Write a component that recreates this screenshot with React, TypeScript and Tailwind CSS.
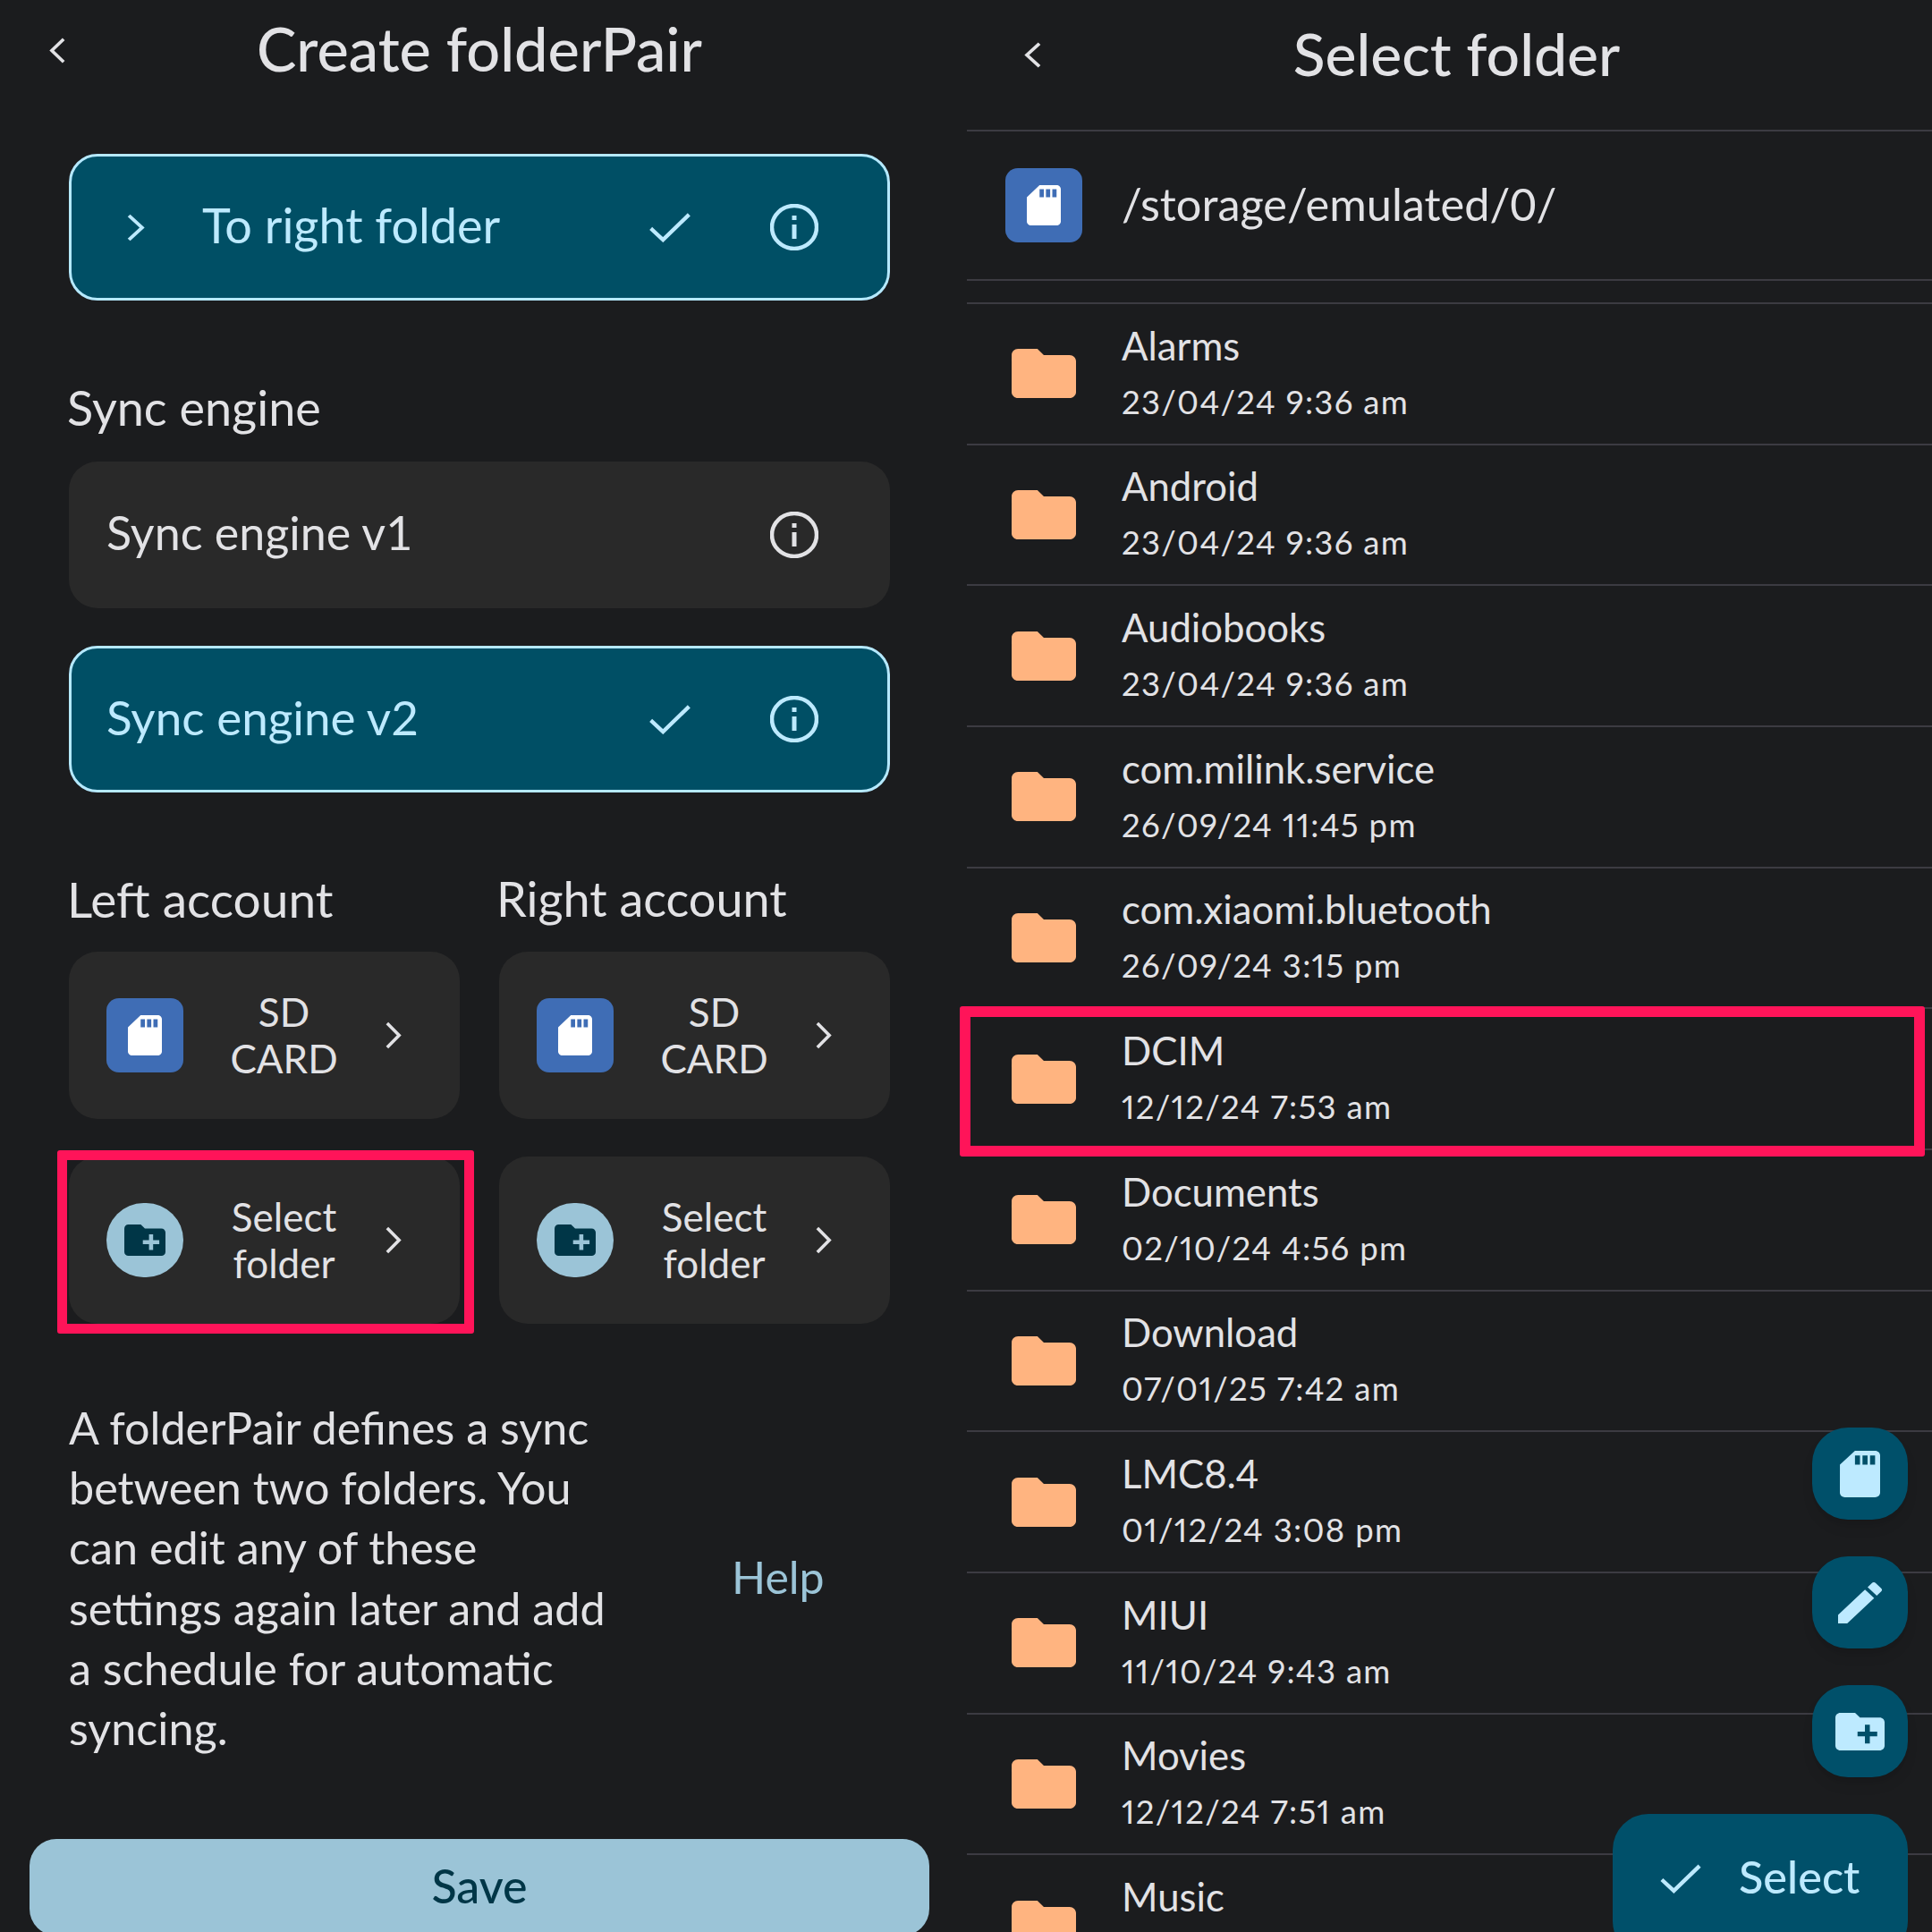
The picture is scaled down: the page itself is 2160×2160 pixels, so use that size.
const SD = 'M18 2h-8L4.02 8 4 20c0 1.1.9 2 2 2h12c1.1 0 2-.9 2-2V4c0-1.1-.9-2-2-2zm-6 6h-2V4h2v4zm3 0h-2V4h2v4zm3 0h-2V4h2v4z'
const FOLDER_ADD = 'M20 6h-8l-2-2H4c-1.11 0-1.99.89-1.99 2L2 18c0 1.11.89 2 2 2h16c1.11 0 2-.89 2-2V8c0-1.11-.89-2-2-2zm-1 8h-3v3h-2v-3h-3v-2h3V9h2v3h3v2z'
const FOLDER = 'M10 4H4c-1.1 0-1.99.9-1.99 2L2 18c0 1.1.9 2 2 2h16c1.1 0 2-.9 2-2V8c0-1.1-.9-2-2-2h-8l-2-2z'
const EDIT = 'M3 17.25V21h3.75L17.81 9.94l-3.75-3.75L3 17.25zM20.71 7.04c.39-.39.39-1.02 0-1.41l-2.34-2.34c-.39-.39-1.02-.39-1.41 0l-1.83 1.83 3.75 3.75 1.83-1.83z'

const folders = [
  ['Alarms', '23/04/24 9:36 am'],
  ['Android', '23/04/24 9:36 am'],
  ['Audiobooks', '23/04/24 9:36 am'],
  ['com.milink.service', '26/09/24 11:45 pm'],
  ['com.xiaomi.bluetooth', '26/09/24 3:15 pm'],
  ['DCIM', '12/12/24 7:53 am'],
  ['Documents', '02/10/24 4:56 pm'],
  ['Download', '07/01/25 7:42 am'],
  ['LMC8.4', '01/12/24 3:08 pm'],
  ['MIUI', '11/10/24 9:43 am'],
  ['Movies', '12/12/24 7:51 am'],
  ['Music', ''],
]

function Glyph({ d, box, className }: { d: string; box: string; className: string }) {
  return (
    <svg viewBox={box} preserveAspectRatio="none" className={className} fill="currentColor">
      <path d={d} />
    </svg>
  )
}

function Chevron({ left, className }: { left?: boolean; className: string }) {
  return (
    <svg viewBox="0 0 20 32" preserveAspectRatio="none" className={className} fill="none" stroke="currentColor" strokeWidth="3.8">
      <polyline points={left ? '17,2 3,16 17,30' : '3,2 17,16 3,30'} />
    </svg>
  )
}

function Check({ className }: { className: string }) {
  return (
    <svg viewBox="0 0 48 34" className={className} fill="none" stroke="currentColor" strokeWidth="4.5">
      <polyline points="2,18 16,31 46,2" />
    </svg>
  )
}

function Info() {
  return (
    <svg viewBox="0 0 54 52" className="w-[54px] h-[52px] shrink-0" fill="none" stroke="currentColor">
      <ellipse cx="27" cy="26" rx="25" ry="24" strokeWidth="4.5" />
      <line x1="27" y1="23" x2="27" y2="39" strokeWidth="5" />
      <line x1="27" y1="13" x2="27" y2="18" strokeWidth="5" />
    </svg>
  )
}

function SdBadge() {
  return (
    <div className="w-[86px] h-[83px] shrink-0 rounded-[14px] bg-[#3f6db5] flex items-center justify-center text-white">
      <Glyph d={SD} box="4 2 16 20" className="w-[38px] h-[45px]" />
    </div>
  )
}

function AccountCard({ lines, kind }: { lines: string[]; kind: 'sd' | 'folder' }) {
  return (
    <div className="h-[187px] rounded-[32px] bg-[#292929] flex items-center pl-[42px] pr-[65px] text-[#e2e2e5]">
      {kind === 'sd' ? (
        <SdBadge />
      ) : (
        <div className="w-[86px] h-[83px] shrink-0 rounded-full bg-[#9bc4d7] flex items-center justify-center text-[#003647]">
          <Glyph d={FOLDER_ADD} box="2 4 20 16" className="w-[46px] h-[35px]" />
        </div>
      )}
      <div className="flex-1 text-center text-[44px] leading-[52px] pb-[2px]">
        {lines.map((l) => (
          <div key={l}>{l}</div>
        ))}
      </div>
      <Chevron className="w-[19px] h-[31px] shrink-0" />
    </div>
  )
}

function Fab({ children }: { children: React.ReactNode }) {
  return (
    <div className="w-[107px] h-[103px] rounded-[40px] bg-[#00506a] text-[#bdeaff] flex items-center justify-center shadow-lg">
      {children}
    </div>
  )
}

export default function App() {
  return (
    <div className="relative flex w-[2160px] h-[2160px] overflow-hidden bg-[#1b1c1e] font-[Lato,sans-serif] text-[#e2e2e5]">
      {/* left screen */}
      <div className="w-[1072px] shrink-0 mr-[9px]">
        <div className="h-[112px] grid grid-cols-[1fr_auto_1fr] items-center pl-[55px]">
          <Chevron left className="w-[19px] h-[29px]" />
          <div className="text-[66.7px] font-medium leading-none -ml-[55px] pb-[3px]">Create folderPair</div>
        </div>

        <div className="mx-[77px] mt-[60px] h-[164px] rounded-[32px] border-[3px] border-[#b5e9ff] bg-[#004f65] text-[#bdeaff] flex items-center pl-[61px] pr-[77px]">
          <Chevron className="w-[21px] h-[31px]" />
          <div className="flex-1 ml-[64px] text-[54px] pb-[6px]">To right folder</div>
          <Check className="w-[48px] h-[33px] mr-[88px]" />
          <Info />
        </div>

        <div className="mx-[75px] mt-[90px] text-[54px] leading-[60px]">Sync engine</div>

        <div className="mx-[77px] mt-[30px] h-[164px] rounded-[32px] bg-[#292929] flex items-center justify-between pl-[42px] pr-[80px]">
          <div className="text-[52px] pb-[6px]">Sync engine v1</div>
          <Info />
        </div>

        <div className="mx-[77px] mt-[42px] h-[164px] rounded-[32px] border-[3px] border-[#b5e9ff] bg-[#004f65] text-[#bdeaff] flex items-center pl-[39px] pr-[77px]">
          <div className="flex-1 text-[53px] pb-[4px]">Sync engine v2</div>
          <Check className="w-[48px] h-[33px] mr-[88px]" />
          <Info />
        </div>

        <div className="mx-[77px] mt-[89px] grid grid-cols-2 gap-x-[44px]">
          <div className="text-[55px] leading-[60px] mb-[29px] -ml-[2px]">Left account</div>
          <div className="text-[54px] leading-[60px] mb-[29px] -ml-[3px]">Right account</div>
          <AccountCard kind="sd" lines={['SD', 'CARD']} />
          <AccountCard kind="sd" lines={['SD', 'CARD']} />
          <div className="mt-[42px]">
            <AccountCard kind="folder" lines={['Select', 'folder']} />
          </div>
          <div className="mt-[42px]">
            <AccountCard kind="folder" lines={['Select', 'folder']} />
          </div>
        </div>

        <div className="ml-[77px] mt-[82px] flex items-center">
          <div className="w-[741px] text-[50.3px] leading-[67.2px]">
            A folderPair defines a sync<br />
            between two folders. You<br />
            can edit any of these<br />
            settings again later and add<br />
            a schedule for automatic<br />
            syncing.
          </div>
          <div className="text-[50px] text-[#9bc4d7]">Help</div>
        </div>

        <div className="mx-[33px] mt-[91px] h-[108px] rounded-[30px] bg-[#9bc4d7] text-[#003647] text-[52px] font-medium flex items-center justify-center pb-[4px]">
          Save
        </div>
      </div>

      {/* right screen */}
      <div className="flex-1">
        <div className="h-[147px] grid grid-cols-[1fr_auto_1fr] items-center border-b-2 border-[#3c3b42] pl-[64px] pr-[48px] pb-[25px]">
          <Chevron left className="w-[20px] h-[29px] mt-[3px]" />
          <div className="text-[66px] font-medium leading-none">Select folder</div>
        </div>
        <div className="h-[167px] flex items-center border-b-2 border-[#3c3b42] pl-[43px]">
          <SdBadge />
          <div className="ml-[44px] text-[50.5px] pb-[4px]">/storage/emulated/0/</div>
        </div>
        <div className="mt-[24px] border-t-2 border-[#3c3b42]">
          {folders.map(([name, date]) => (
            <div key={name} className="h-[157.67px] border-b-2 border-[#3c3b42] flex items-center pl-[50px]">
              <Glyph d={FOLDER} box="2 4 20 16" className="w-[72px] h-[55px] shrink-0 text-[#ffb480]" />
              <div className="ml-[51px]">
                <div className="text-[43.7px] leading-[63px]">{name}</div>
                <div className="text-[36.5px] leading-[63px] tracking-[1.3px] proportional-nums">{date || '\u00a0'}</div>
              </div>
            </div>
          ))}
        </div>
      </div>

      {/* highlight boxes */}
      <div className="absolute left-[64px] top-[1286px] w-[466px] h-[205px] border-[11px] border-[#ff1459] rounded-[3px]" />
      <div className="absolute left-[1073px] top-[1125px] w-[1079px] h-[168px] border-[12px] border-[#ff1459] rounded-[3px]" />

      {/* floating buttons */}
      <div className="absolute right-[27px] top-[1596px] flex flex-col items-end gap-[41px]">
        <Fab>
          <Glyph d={SD} box="4 2 16 20" className="w-[45px] h-[52px]" />
        </Fab>
        <Fab>
          <Glyph d={EDIT} box="3 3 18 18" className="w-[49px] h-[46px]" />
        </Fab>
        <Fab>
          <Glyph d={FOLDER_ADD} box="2 4 20 16" className="w-[55px] h-[42px]" />
        </Fab>
        <div className="w-[330px] h-[160px] rounded-[40px] bg-[#00506a] text-[#bdeaff] flex items-start pl-[53px] pt-[38px] gap-[42px]">
          <Check className="w-[46px] h-[33px] mt-[18px]" />
          <div className="text-[50.5px] font-medium leading-[64px]">Select</div>
        </div>
      </div>
    </div>
  )
}
